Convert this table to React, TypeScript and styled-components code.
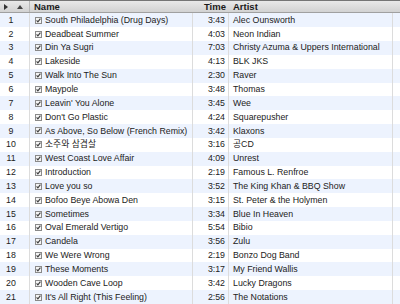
import React from "react";
import styled, { createGlobalStyle } from "styled-components";

const Global = createGlobalStyle`
  html, body { margin: 0; padding: 0; background: #fff; }
  body { font-family: "Liberation Sans", Arial, "Noto Sans CJK KR", sans-serif; }
`;

const COLS = "30px 163px 36px 164px 7px";

const Table = styled.div`
  width: 400px;
  height: 304px;
  overflow: hidden;
  display: flex;
  flex-direction: column;
  background: #fff;
`;

const Header = styled.div`
  display: grid;
  grid-template-columns: ${COLS};
  height: 13.5px;
  box-sizing: border-box;
  border-top: 1px solid #767676;
  border-bottom: 1px solid #a0a0a0;
  background: linear-gradient(#e9e9e9, #d2d2d2);
  font-size: 9.5px;
  font-weight: bold;
  color: #1a1a1a;
`;

const HeadCell = styled.div<{ $align?: string }>`
  display: flex;
  align-items: center;
  justify-content: ${(p) => p.$align || "flex-start"};
  padding: 0 ${(p) => (p.$align === "flex-end" ? "3px" : "0")} 0 ${(p) => (p.$align === "flex-end" ? "0" : "4px")};
  white-space: nowrap;
  overflow: hidden;
  line-height: 1;
`;

const Arrows = styled.div`
  display: flex;
  align-items: center;
  gap: 9px;
  padding-left: 4px;
  border-right: 1px solid #b8b8b8;
`;

const Row = styled.div<{ $odd: boolean }>`
  display: grid;
  grid-template-columns: ${COLS};
  height: 13.85px;
  flex: none;
  background: ${(p) => (p.$odd ? "#edf3fe" : "#ffffff")};
  font-size: 8.8px;
  color: #222;
`;

const Cell = styled.div<{ $align?: string; $pr?: number }>`
  display: flex;
  align-items: center;
  justify-content: ${(p) => p.$align || "flex-start"};
  padding-right: ${(p) => p.$pr ?? 0}px;
  padding-left: ${(p) => (p.$align ? 0 : 4)}px;
  border-right: 1px solid #dcdcdc;
  white-space: nowrap;
  overflow: hidden;
  line-height: 1;
`;

const NameCell = styled(Cell)`
  padding-left: 5px;
  gap: 3px;
`;

const Tail = styled.div`
  border-left: 0;
`;

function Check() {
  return (
    <svg width="7" height="7" viewBox="0 0 7 7" style={{ flex: "none" }}>
      <rect x="0.5" y="0.5" width="6" height="6" fill="#f4f4f4" stroke="#8a8a8a" />
      <path d="M1.6 3.4 L2.9 4.8 L5.4 1.7" fill="none" stroke="#3a3a3a" strokeWidth="1.1" />
    </svg>
  );
}

const tracks: [string, string, string][] = [
  ["South Philadelphia (Drug Days)", "3:43", "Alec Ounsworth"],
  ["Deadbeat Summer", "4:03", "Neon Indian"],
  ["Din Ya Sugri", "7:03", "Christy Azuma & Uppers International"],
  ["Lakeside", "4:13", "BLK JKS"],
  ["Walk Into The Sun", "2:30", "Raver"],
  ["Maypole", "3:48", "Thomas"],
  ["Leavin' You Alone", "3:45", "Wee"],
  ["Don't Go Plastic", "4:24", "Squarepusher"],
  ["As Above, So Below (French Remix)", "3:42", "Klaxons"],
  ["소주와 삼겹살", "3:16", "공CD"],
  ["West Coast Love Affair", "4:09", "Unrest"],
  ["Introduction", "2:19", "Famous L. Renfroe"],
  ["Love you so", "3:52", "The King Khan & BBQ Show"],
  ["Bofoo Beye Abowa Den", "3:15", "St. Peter & the Holymen"],
  ["Sometimes", "3:34", "Blue In Heaven"],
  ["Oval Emerald Vertigo", "5:54", "Bibio"],
  ["Candela", "3:56", "Zulu"],
  ["We Were Wrong", "2:19", "Bonzo Dog Band"],
  ["These Moments", "3:17", "My Friend Wallis"],
  ["Wooden Cave Loop", "3:42", "Lucky Dragons"],
  ["It's All Right (This Feeling)", "2:56", "The Notations"],
];

export default function App() {
  return (
    <>
      <Global />
      <Table>
        <Header>
          <Arrows>
            <svg width="4" height="6" viewBox="0 0 4 6"><path d="M0 0 L4 3 L0 6 Z" fill="#333" /></svg>
            <svg width="6" height="4" viewBox="0 0 6 4"><path d="M0 4 L3 0 L6 4 Z" fill="#444" /></svg>
          </Arrows>
          <HeadCell>Name</HeadCell>
          <HeadCell $align="flex-end">Time</HeadCell>
          <HeadCell>Artist</HeadCell>
          <HeadCell />
        </Header>
        {tracks.map(([name, time, artist], i) => (
          <Row key={i} $odd={i % 2 === 0}>
            <Cell $align="center" $pr={7}>{i + 1}</Cell>
            <NameCell>
              <Check />
              <span>{name}</span>
            </NameCell>
            <Cell $align="flex-end" $pr={3}>{time}</Cell>
            <Cell>{artist}</Cell>
            <Tail />
          </Row>
        ))}
      </Table>
    </>
  );
}
